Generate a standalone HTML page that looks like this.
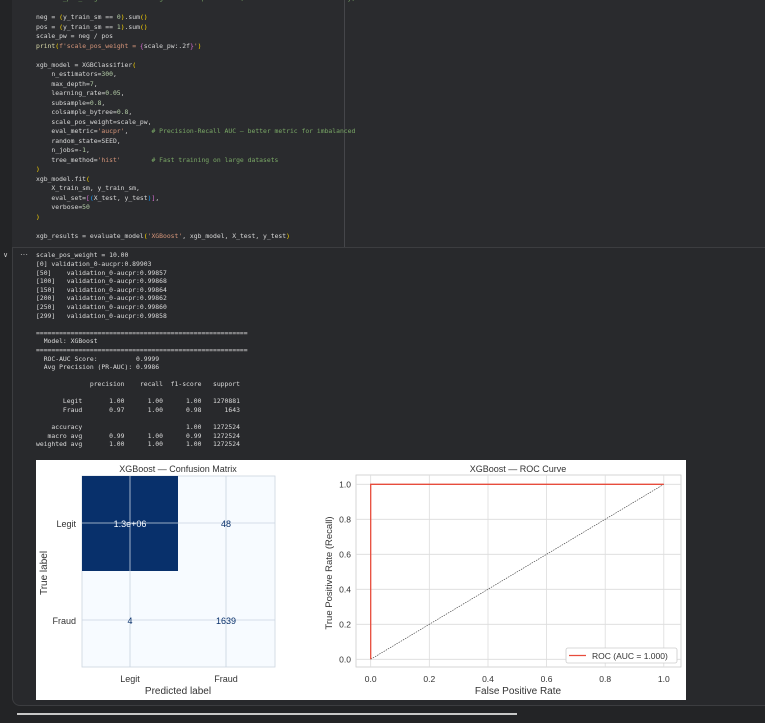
<!DOCTYPE html>
<html><head><meta charset="utf-8"><style>
html,body{margin:0;padding:0;background:#232426;width:765px;height:723px;overflow:hidden;position:relative}
.cell{position:absolute;left:12px;top:-10px;width:800px;height:714px;border:1px solid #3c3d40;border-radius:8px;background:#28292c}
.codebg{position:absolute;left:12px;top:-10px;width:800px;height:257px;background:#2a2b2e;border-bottom:1px solid #3c3d40}
.ruler{position:absolute;left:344px;top:0;width:1px;height:247px;background:#45464a}
pre{position:absolute;margin:0;font-family:"DejaVu Sans Mono","Liberation Mono",monospace;font-size:6.4px;color:#d8d8d8;white-space:pre}
.code{left:36px;top:-5.75px;line-height:9.5px}
.out{left:36px;top:251.4px;line-height:8.6px;color:#dcdcdc}
.c{color:#7aa866}.s{color:#d7967a}.n{color:#b5cea8}.y{color:#ffd700}.f{color:#dcdcaa}.p{color:#da70d6}.b{color:#179fff}
.bottomline{position:absolute;left:17px;top:713px;width:500px;height:2px;background:#c8c8c8}
.gut{position:absolute;font-family:"Liberation Sans",sans-serif;color:#ccc;font-size:8px}
</style></head><body>
<div class="cell"></div>
<div class="codebg"></div>
<div class="ruler"></div>
<pre class="code"><span class="c"># scale_pos_weight = ratio of negatives to positives (handles imbalance internally)</span>

neg = <span class="y">(</span>y_train_sm == <span class="n">0</span><span class="y">)</span>.sum<span class="y">()</span>
pos = <span class="y">(</span>y_train_sm == <span class="n">1</span><span class="y">)</span>.sum<span class="y">()</span>
scale_pw = neg / pos
<span class="f">print</span><span class="y">(</span><span class="s">f'scale_pos_weight = </span><span class="p">{</span>scale_pw:.2f<span class="p">}</span><span class="s">'</span><span class="y">)</span>

xgb_model = XGBClassifier<span class="y">(</span>
    n_estimators=<span class="n">300</span>,
    max_depth=<span class="n">7</span>,
    learning_rate=<span class="n">0.05</span>,
    subsample=<span class="n">0.8</span>,
    colsample_bytree=<span class="n">0.8</span>,
    scale_pos_weight=scale_pw,
    eval_metric=<span class="s">'aucpr'</span>,      <span class="c"># Precision-Recall AUC — better metric for imbalanced</span>
    random_state=SEED,
    n_jobs=-<span class="n">1</span>,
    tree_method=<span class="s">'hist'</span>        <span class="c"># Fast training on large datasets</span>
<span class="y">)</span>
xgb_model.fit<span class="y">(</span>
    X_train_sm, y_train_sm,
    eval_set=<span class="p">[</span><span class="b">(</span>X_test, y_test<span class="b">)</span><span class="p">]</span>,
    verbose=<span class="n">50</span>
<span class="y">)</span>

xgb_results = evaluate_model<span class="y">(</span><span class="s">'XGBoost'</span>, xgb_model, X_test, y_test<span class="y">)</span></pre>
<div class="gut" style="left:3px;top:251px;font-size:7px">&#8744;</div>
<div class="gut" style="left:20px;top:250px;font-size:8px">&#183;&#183;&#183;</div>
<pre class="out">scale_pos_weight = 10.00
[0] validation_0-aucpr:0.89903
[50]    validation_0-aucpr:0.99857
[100]   validation_0-aucpr:0.99868
[150]   validation_0-aucpr:0.99864
[200]   validation_0-aucpr:0.99862
[250]   validation_0-aucpr:0.99860
[299]   validation_0-aucpr:0.99858

=======================================================
  Model: XGBoost
=======================================================
  ROC-AUC Score:          0.9999
  Avg Precision (PR-AUC): 0.9986

              precision    recall  f1-score   support

       Legit       1.00      1.00      1.00   1270881
       Fraud       0.97      1.00      0.98      1643

    accuracy                           1.00   1272524
   macro avg       0.99      1.00      0.99   1272524
weighted avg       1.00      1.00      1.00   1272524</pre>

<svg style="position:absolute;left:36px;top:460px" width="650" height="240" viewBox="36 460 650 240" font-family="Liberation Sans, DejaVu Sans, sans-serif">
<rect x="36" y="460" width="650" height="240" fill="#fff"/>
<text x="178" y="472" font-size="9" text-anchor="middle" fill="#333">XGBoost — Confusion Matrix</text>
<rect x="82" y="476" width="193" height="191" fill="#f7fbff" stroke="#ccd6e0" stroke-width="0.8"/>
<rect x="82" y="476" width="96" height="95" fill="#08306b"/>
<line x1="130" y1="476" x2="130" y2="667" stroke="#c8d4e0" stroke-width="0.8"/>
<line x1="226" y1="476" x2="226" y2="667" stroke="#c8d4e0" stroke-width="0.8"/>
<line x1="82" y1="523" x2="275" y2="523" stroke="#c8d4e0" stroke-width="0.8"/>
<line x1="82" y1="620" x2="275" y2="620" stroke="#c8d4e0" stroke-width="0.8"/>
<text x="130" y="527" font-size="9" text-anchor="middle" fill="#f7fbff">1.3e+06</text>
<text x="226" y="527" font-size="9" text-anchor="middle" fill="#08306b">48</text>
<text x="130" y="624" font-size="9" text-anchor="middle" fill="#08306b">4</text>
<text x="226" y="624" font-size="9" text-anchor="middle" fill="#08306b">1639</text>
<text x="76" y="527" font-size="9" text-anchor="end" fill="#333">Legit</text>
<text x="76" y="624" font-size="9" text-anchor="end" fill="#333">Fraud</text>
<text x="130" y="682" font-size="9" text-anchor="middle" fill="#333">Legit</text>
<text x="226" y="682" font-size="9" text-anchor="middle" fill="#333">Fraud</text>
<text x="178" y="694" font-size="10" text-anchor="middle" fill="#333">Predicted label</text>
<text transform="translate(47,573) rotate(-90)" font-size="10" text-anchor="middle" fill="#333">True label</text>
<text x="518" y="472" font-size="9" text-anchor="middle" fill="#333">XGBoost — ROC Curve</text>
<rect x="356" y="475" width="325" height="192" fill="#fff" stroke="#ccc" stroke-width="0.8"/>
<g stroke="#dcdcdc" stroke-width="0.8">
<line x1="370.7" y1="475" x2="370.7" y2="667"/><line x1="429.3" y1="475" x2="429.3" y2="667"/><line x1="488" y1="475" x2="488" y2="667"/><line x1="546.6" y1="475" x2="546.6" y2="667"/><line x1="605.2" y1="475" x2="605.2" y2="667"/><line x1="663.8" y1="475" x2="663.8" y2="667"/>
<line x1="356" y1="484.3" x2="681" y2="484.3"/><line x1="356" y1="519.3" x2="681" y2="519.3"/><line x1="356" y1="554.3" x2="681" y2="554.3"/><line x1="356" y1="589.3" x2="681" y2="589.3"/><line x1="356" y1="624.3" x2="681" y2="624.3"/><line x1="356" y1="659.3" x2="681" y2="659.3"/>
</g>
<line x1="370.7" y1="659.3" x2="663.8" y2="484.3" stroke="#333" stroke-width="0.6" stroke-dasharray="1.5,1"/>
<polyline points="370.7,659.3 370.7,484.3 663.8,484.3" fill="none" stroke="#e74c3c" stroke-width="1.3"/>
<g font-size="8.5" fill="#333" text-anchor="end">
<text x="351" y="487.5">1.0</text><text x="351" y="522.5">0.8</text><text x="351" y="557.5">0.6</text><text x="351" y="592.5">0.4</text><text x="351" y="627.5">0.2</text><text x="351" y="662.5">0.0</text>
</g>
<g font-size="8.5" fill="#333" text-anchor="middle">
<text x="370.7" y="682">0.0</text><text x="429.3" y="682">0.2</text><text x="488" y="682">0.4</text><text x="546.6" y="682">0.6</text><text x="605.2" y="682">0.8</text><text x="663.8" y="682">1.0</text>
</g>
<text x="518" y="694" font-size="10" text-anchor="middle" fill="#333">False Positive Rate</text>
<text transform="translate(332,573) rotate(-90)" font-size="9.5" text-anchor="middle" fill="#333">True Positive Rate (Recall)</text>
<rect x="566" y="648" width="111" height="15" rx="2" fill="#fff" stroke="#ccc" stroke-width="0.8"/>
<line x1="569" y1="655.5" x2="586" y2="655.5" stroke="#e74c3c" stroke-width="1.3"/>
<text x="592" y="659" font-size="8.5" fill="#333">ROC (AUC = 1.000)</text>
</svg>
<div class="bottomline"></div>
</body></html>
